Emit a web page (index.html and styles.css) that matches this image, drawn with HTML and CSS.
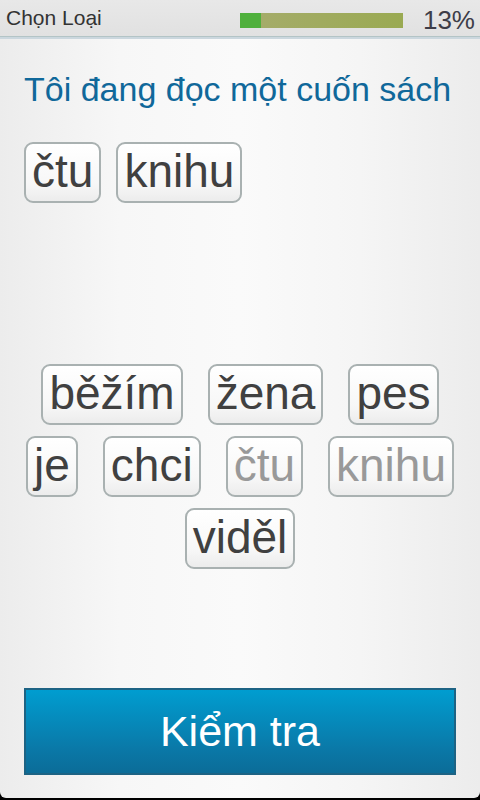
FILE: index.html
```html
<!DOCTYPE html>
<html lang="vi">
<head>
    <meta charset="UTF-8">
    <meta name="viewport" content="width=device-width, initial-scale=1.0">
    <title>Chọn Loại</title>
    <link rel="stylesheet" href="styles.css">
</head>
<body>
    <div class="screen">
        <div class="topbar">
            <span class="mode">Chọn Loại</span>
            <div class="progress">
                <div class="progress-fill" style="width: 13%"></div>
            </div>
            <span class="percent">13%</span>
        </div>

        <div class="content">
            <div class="question">Tôi đang đọc một cuốn sách</div>

            <div class="answer">
                <span class="tile">čtu</span>
                <span class="tile">knihu</span>
            </div>

            <div class="bank">
                <div class="bank-row">
                    <span class="tile">běžím</span>
                    <span class="tile">žena</span>
                    <span class="tile">pes</span>
                </div>
                <div class="bank-row">
                    <span class="tile">je</span>
                    <span class="tile">chci</span>
                    <span class="tile used">čtu</span>
                    <span class="tile used">knihu</span>
                </div>
                <div class="bank-row">
                    <span class="tile">viděl</span>
                </div>
            </div>

            <button class="check">Kiểm tra</button>
        </div>
    </div>
</body>
</html>
```

FILE: styles.css
```css
html, body {
    margin: 0;
    height: 100%;
    background: #000;
}

body {
    font-family: "Liberation Sans", Arial, sans-serif;
}

.screen {
    height: 798px;
    display: flex;
    flex-direction: column;
    background: linear-gradient(90deg, #ececec 0%, #f7f7f7 25%, #fafafa 50%, #f5f5f5 75%, #ececec 100%);
    border-radius: 0 0 6px 6px;
    overflow: hidden;
}

.topbar {
    height: 36px;
    flex-shrink: 0;
    display: flex;
    align-items: center;
    background: linear-gradient(#e8e8e8, #e1e1e1);
    border-bottom: 1px solid #b3c4c6;
    box-shadow: 0 2px 0 #cbd7de;
}

.mode {
    margin-left: 6px;
    font-size: 21px;
    color: #333;
    flex: 1;
}

.progress {
    width: 163px;
    height: 15px;
    margin-top: 5px;
    background: linear-gradient(90deg, #a6ac6c, #9aaa52);
}

.progress-fill {
    height: 100%;
    background: #4fb03c;
}

.percent {
    margin-left: 20px;
    margin-right: 5px;
    margin-top: 4px;
    font-size: 26px;
    color: #3d3d48;
}

.content {
    flex: 1;
    display: flex;
    flex-direction: column;
    padding: 0 24px;
}

.question {
    margin-top: 33px;
    font-size: 34px;
    line-height: 39px;
    color: #10689a;
}

.answer {
    margin-top: 33px;
    display: flex;
    gap: 15px;
    height: 222px;
    align-items: flex-start;
}

.tile {
    display: inline-block;
    padding: 0 6px 2px;
    font-size: 46px;
    line-height: 55px;
    color: #404040;
    border: 2px solid #a9b1b1;
    border-radius: 9px;
    background: linear-gradient(#ffffff 0%, #f7f7f7 70%, #ececec 100%);
}

.tile.used {
    color: #999;
}

.bank {
    display: flex;
    flex-direction: column;
    gap: 11px;
}

.bank-row {
    display: flex;
    justify-content: center;
    gap: 25px;
}

.check {
    margin-top: auto;
    margin-bottom: 23px;
    height: 87px;
    border: 2px solid #1d6384;
    background: linear-gradient(#009dd0, #0a79a8 70%, #0b6c98);
    color: #fff;
    font-family: "Liberation Sans", Arial, sans-serif;
    font-size: 43px;
    padding: 0;
}
```
